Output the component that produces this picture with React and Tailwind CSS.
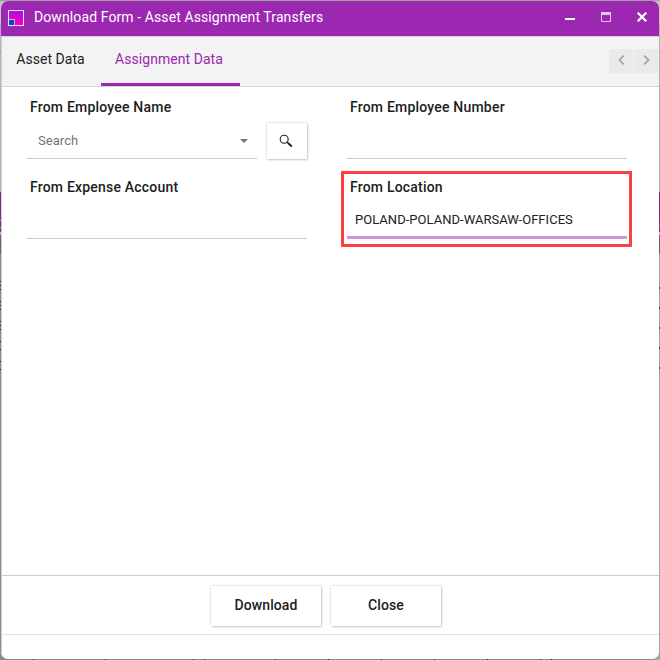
const tabs = [
  { label: "Asset Data", active: false },
  { label: "Assignment Data", active: true },
];

// slivers of the page behind the window: [height, colour class]
const leftEdge = [
  [25, "bg-[#c4c4c4]"],
  [1, "bg-[#909090]"],
  [26, "bg-[#b4b4b4]"],
  [1, "bg-[#888888]"],
  [139, "bg-[#b4b4b4]"],
  [28, "bg-[#84288c]"],
  [1, "bg-[#b59ab8]"],
  [6, "bg-[#84288c]"],
  [1, "bg-[#b59ab8]"],
  [4, "bg-[#84288c]"],
  [3, "bg-[#b4b4b4]"],
  [19, "bg-[#66656b]"],
  [406, "bg-[#8c8c8c]"],
];

const rightEdge = [
  [25, "bg-[#c4c4c4]"],
  [1, "bg-[#909090]"],
  [26, "bg-[#b4b4b4]"],
  [1, "bg-[#888888]"],
  [139, "bg-[#b0b0b0]"],
  [31, "bg-[#7d2585]"],
  [6, "bg-[#6f4c9c]"],
  [3, "bg-[#7d2585]"],
  [3, "bg-[#c0c0c0]"],
  [19, "bg-[#636363]"],
  [406, "bg-[#a4a4a4]"],
];

const leftTicks = [281, 285, 289, 301, 305, 309, 321, 325, 329, 341, 349, 361, 369];
const rightTicks = [287, 307, 327, 347, 367];
const bottomTicks = [33, 105, 193, 204, 275, 328, 381, 434, 487, 540, 551];

const Backdrop = () => (
  <div className="absolute inset-0 bg-[#8c8c8c]">
    <div className="absolute inset-y-0 left-0 w-1.5">
      {leftEdge.map(([height, color], i) => (
        <div key={i} className={color} style={{ height }} />
      ))}
    </div>
    <div className="absolute inset-y-0 right-0 w-1.5">
      {rightEdge.map(([height, color], i) => (
        <div key={i} className={color} style={{ height }} />
      ))}
    </div>
    <div className="absolute inset-x-0 top-0 h-px bg-[#a0a0a0]" />
    {leftTicks.map((top) => (
      <span key={top} className="absolute left-0 h-px w-px bg-[#222222]" style={{ top }} />
    ))}
    {rightTicks.map((top) => (
      <span key={top} className="absolute right-0 h-0.5 w-px bg-[#444444]" style={{ top }} />
    ))}
    {bottomTicks.map((left) => (
      <span key={left} className="absolute bottom-0 h-px w-px bg-[#222222]" style={{ left }} />
    ))}
  </div>
);

const Logo = () => (
  <svg width="16" height="16" viewBox="0 0 16 16">
    <defs>
      <linearGradient id="logo" x1="0.7" y1="0" x2="0.5" y2="0.9">
        <stop offset="0" stopColor="#9a18d8" />
        <stop offset="0.6" stopColor="#e400cc" />
        <stop offset="1" stopColor="#f800c0" />
      </linearGradient>
    </defs>
    <rect width="16" height="16" fill="#f3dff5" />
    <rect x="1" y="1" width="14" height="14" fill="url(#logo)" />
    <rect x="1" y="9" width="6" height="6" fill="#c9a8e4" />
    <rect x="1" y="10" width="5" height="5" fill="#0050c8" />
  </svg>
);

const TitleBar = () => (
  <header className="flex h-[35px] shrink-0 items-start bg-[#9c27b0] pr-3 pl-[7px] text-white">
    <div className="mt-[9px]">
      <Logo />
    </div>
    <h1 className="mt-1.5 ml-2.5 flex-1 text-[14px] leading-5 tracking-[0.1px]">
      Download Form - Asset Assignment Transfers
    </h1>
    <div className="mt-[11px] flex gap-[26px]">
      <svg width="10" height="10" viewBox="0 0 10 10">
        <path d="M0 7h10" stroke="currentColor" strokeWidth="2" />
      </svg>
      <svg width="10" height="10" viewBox="0 0 10 10" className="text-[#e6c5eb]">
        <path d="M0 1.5h10" stroke="currentColor" strokeWidth="3" />
        <path d="M.5 1v8.5h9V1" fill="none" stroke="currentColor" />
      </svg>
      <svg width="10" height="10" viewBox="0 0 10 10">
        <path d="M.7.7l8.6 8.6M9.3.7L.7 9.3" stroke="currentColor" strokeWidth="2.2" />
      </svg>
    </div>
  </header>
);

const TabBar = () => (
  <nav className="flex h-[51px] shrink-0 border-y border-[#d4d4d4] bg-[#f3f3f3] text-[14px] tracking-[0.05px]">
    {tabs.map(({ label, active }) => (
      <button
        key={label}
        type="button"
        className={
          active
            ? "h-[49px] w-[139px] border-b-3 border-[#9c27b0] pb-px pr-[3px] text-[#9c27b0]"
            : "h-[49px] w-[99px] pr-[2px] pb-1 text-[#212121]"
        }
      >
        {label}
      </button>
    ))}
    <div className="mt-3 mr-px ml-auto flex gap-px text-[#a0a0a0]">
      <span className="flex size-6 items-center justify-center bg-[#eaeaea]">
        <svg width="7" height="10" viewBox="0 0 7 10" className="-mt-0.5">
          <path d="M5.8.6L1.4 5l4.4 4.4" fill="none" stroke="currentColor" strokeWidth="1.6" />
        </svg>
      </span>
      <span className="flex size-6 items-center justify-center bg-[#eaeaea]">
        <svg width="7" height="10" viewBox="0 0 7 10" className="-mt-0.5">
          <path d="M1.2.6L5.6 5 1.2 9.4" fill="none" stroke="currentColor" strokeWidth="1.6" />
        </svg>
      </span>
    </div>
  </nav>
);

const Field = ({ label, children }) => (
  <div className="h-20">
    <div className="h-9 pt-2.5 pl-[3px] text-[14px] leading-5 font-medium tracking-[0.2px] text-[#212121]">
      {label}
    </div>
    {children}
  </div>
);

const EmptyInput = () => <div className="h-9 w-[280px] border-b border-[#cccccc]" />;

const SearchIcon = () => (
  <svg width="14" height="14" viewBox="0 0 14 14" fill="none" stroke="#212121">
    <circle cx="5.2" cy="5.2" r="4" strokeWidth="1.1" />
    <path d="M8.2 8.2l1.3 1.3" strokeWidth="1.2" />
    <path d="M9 9l3.8 3.4" strokeWidth="2" />
  </svg>
);

const FormBody = () => (
  <main className="grid flex-1 grid-cols-[320px_1fr] content-start pl-[25px]">
    <Field label="From Employee Name">
      <div className="flex gap-2.5">
        <div className="flex h-9 w-[230px] items-center justify-between border-b border-[#cccccc] pr-[9px] pl-[11px] text-[13px] tracking-[0.05px] text-[#757575]">
          <span>Search</span>
          <svg width="8" height="4" viewBox="0 0 8 4">
            <path d="M0 0h8L4 4z" fill="currentColor" />
          </svg>
        </div>
        <button
          type="button"
          className="flex h-9 w-10 items-center justify-center bg-white pr-0.5 pb-px shadow-[0_0_2px_rgba(0,0,0,0.25),1px_1px_2px_rgba(0,0,0,0.15)]"
        >
          <SearchIcon />
        </button>
      </div>
    </Field>
    <Field label="From Employee Number">
      <EmptyInput />
    </Field>
    <Field label="From Expense Account">
      <EmptyInput />
    </Field>
    <div className="relative">
      <Field label="From Location">
        <div className="flex h-9 w-[280px] items-center border-b-3 border-[#ce93d8] pl-2 text-[13px] tracking-[0.03px] text-[#212121]">
          POLAND-POLAND-WARSAW-OFFICES
        </div>
      </Field>
      {/* callout frame around the prefilled field */}
      <div className="absolute top-1 -left-1.5 h-[76px] w-[291px] border-3 border-[#fb4141]" />
    </div>
  </main>
);

const Footer = () => (
  <footer className="shrink-0">
    <div className="flex h-[60px] justify-center gap-2.5 border-y border-t-[#cccccc] border-b-[#e2e2e2] pt-2.5 pr-[9px] text-[14px] font-medium tracking-[0.1px] text-[#212121]">
      {["Download", "Close"].map((label) => (
        <button
          key={label}
          type="button"
          className="h-10 w-[110px] bg-white pb-0.5 shadow-[0_0_2px_rgba(0,0,0,0.25),1px_1px_2px_rgba(0,0,0,0.15)]"
        >
          {label}
        </button>
      ))}
    </div>
    <div className="h-6" />
  </footer>
);

const App = () => {
  return (
    <div className="relative size-[660px] overflow-hidden p-px font-['Roboto',sans-serif]">
      <Backdrop />
      <div className="relative flex h-full flex-col overflow-hidden rounded-[7px] bg-white">
        <TitleBar />
        <div className="flex flex-1 flex-col border-l border-[#d0d0d0]">
          <TabBar />
          <FormBody />
          <Footer />
        </div>
      </div>
    </div>
  );
};

export default App;
